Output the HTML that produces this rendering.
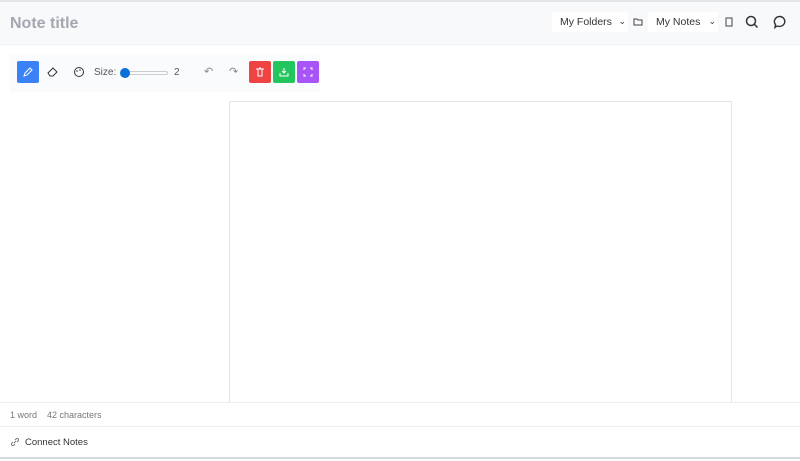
<!DOCTYPE html>
<html><head><style>
*{box-sizing:border-box;margin:0;padding:0}
body{width:800px;height:461px;overflow:hidden;background:#fff;font-family:"Liberation Sans",sans-serif;position:relative}
.top{position:absolute;left:0;top:0;width:800px;height:45px;background:#f8f9fb;border-top:2px solid #e3e5e8;border-bottom:1px solid #eef0f2}
.title{position:absolute;left:10px;top:13px;font-size:16px;font-weight:bold;color:#a3a7ae}
.sel{position:absolute;top:12px;height:20px;background:#fff;font-size:10.5px;color:#333;padding:4px 0 0 8px}
.tb{position:absolute;left:10px;top:54px;width:310px;height:38px;background:#fafbfc}
.btn{position:absolute;top:61px;width:22px;height:22px;border-radius:2px}
.canvas{position:absolute;left:229px;top:101px;width:503px;height:310px;border:1px solid #e2e4e7;border-bottom:none}
.stat{position:absolute;left:0;top:402px;width:800px;height:25px;background:#fff;border-top:1px solid #eceef0;border-bottom:1px solid #eceef0;font-size:9px;color:#777;padding:7px 10px}
.conn{position:absolute;left:0;top:427px;width:800px;height:32px;background:#fff;font-size:9.5px;color:#333;padding:10px 0 0 25px;border-bottom:2px solid #d8dadd}
svg{position:absolute}
</style></head><body>
<div class="top"><div class="title">Note title</div></div>
<div class="sel" style="left:552px;width:76px">My Folders<span style="position:absolute;right:2px;font-size:9px">⌄</span></div>
<svg style="left:633px;top:17px" width="10" height="10" viewBox="0 0 10 10"><path d="M1 2h3l1 1h4v5H1z" fill="none" stroke="#444" stroke-width="1"/></svg>
<div class="sel" style="left:648px;width:70px">My Notes<span style="position:absolute;right:2px;font-size:9px">⌄</span></div>
<svg style="left:724px;top:17px" width="10" height="10"><rect x="2" y="1" width="6" height="8" fill="none" stroke="#444"/></svg>
<svg style="left:745px;top:15px" width="14" height="14"><circle cx="6" cy="6" r="4.5" fill="none" stroke="#333" stroke-width="1.5"/><path d="M9.5 9.5l3 3" stroke="#333" stroke-width="1.5"/></svg>
<svg style="left:773px;top:15px" width="14" height="14"><path d="M7 1.5a5.5 5 0 1 1-3 9.5l-2 1.5 .5-3A5.5 5 0 0 1 7 1.5z" fill="none" stroke="#333" stroke-width="1.4"/></svg>
<div class="tb"></div>
<div class="btn" style="left:17px;background:#3b82f6"></div>
<svg style="left:23px;top:67px" width="10" height="10"><path d="M1 9l1-3 5-5 2 2-5 5z" fill="none" stroke="#fff"/></svg>
<svg style="left:47px;top:67px" width="11" height="10"><path d="M1 6l5-5 4 4-4 4H3z" fill="none" stroke="#333"/></svg>
<svg style="left:73px;top:66px" width="12" height="12"><circle cx="6" cy="6" r="4.5" fill="none" stroke="#333"/><circle cx="4" cy="5" r=".8" fill="#333"/><circle cx="7" cy="4" r=".8" fill="#333"/></svg>
<div style="position:absolute;left:94px;top:67px;font-size:10px;color:#555">Size:</div>
<div style="position:absolute;left:122px;top:71px;width:46px;height:4px;border:1px solid #ccc;border-radius:3px"></div>
<div style="position:absolute;left:120px;top:68px;width:10px;height:10px;border-radius:50%;background:#0a6fd6"></div>
<div style="position:absolute;left:174px;top:67px;font-size:10px;color:#555">2</div>
<div style="position:absolute;left:204px;top:65px;font-size:11px;color:#888">↶</div>
<div style="position:absolute;left:229px;top:65px;font-size:11px;color:#888">↷</div>
<div class="btn" style="left:249px;background:#ef4444"></div>
<div class="btn" style="left:273px;background:#22c55e"></div>
<div class="btn" style="left:297px;background:#a855f7"></div>
<svg style="left:255px;top:67px" width="10" height="10"><path d="M1 2h8M3 2v7h4V2M4 1h2" fill="none" stroke="#fff"/></svg>
<svg style="left:279px;top:67px" width="10" height="10"><path d="M5 1v5M3 4l2 2 2-2M1 6v3h8V6" fill="none" stroke="#fff"/></svg>
<svg style="left:303px;top:67px" width="10" height="10"><path d="M1 3V1h2M7 1h2v2M9 7v2H7M3 9H1V7" fill="none" stroke="#fff"/></svg>
<div class="canvas"></div>
<div class="stat">1 word &nbsp;&nbsp; 42 characters</div>
<div class="conn">Connect Notes</div>
<svg style="left:10px;top:437px" width="10" height="10"><path d="M4 6l2-2M3 5L1.5 6.5a1.5 1.5 0 0 0 2 2L5 7M7 5l1.5-1.5a1.5 1.5 0 0 0-2-2L5 3" fill="none" stroke="#777"/></svg>
</body></html>
